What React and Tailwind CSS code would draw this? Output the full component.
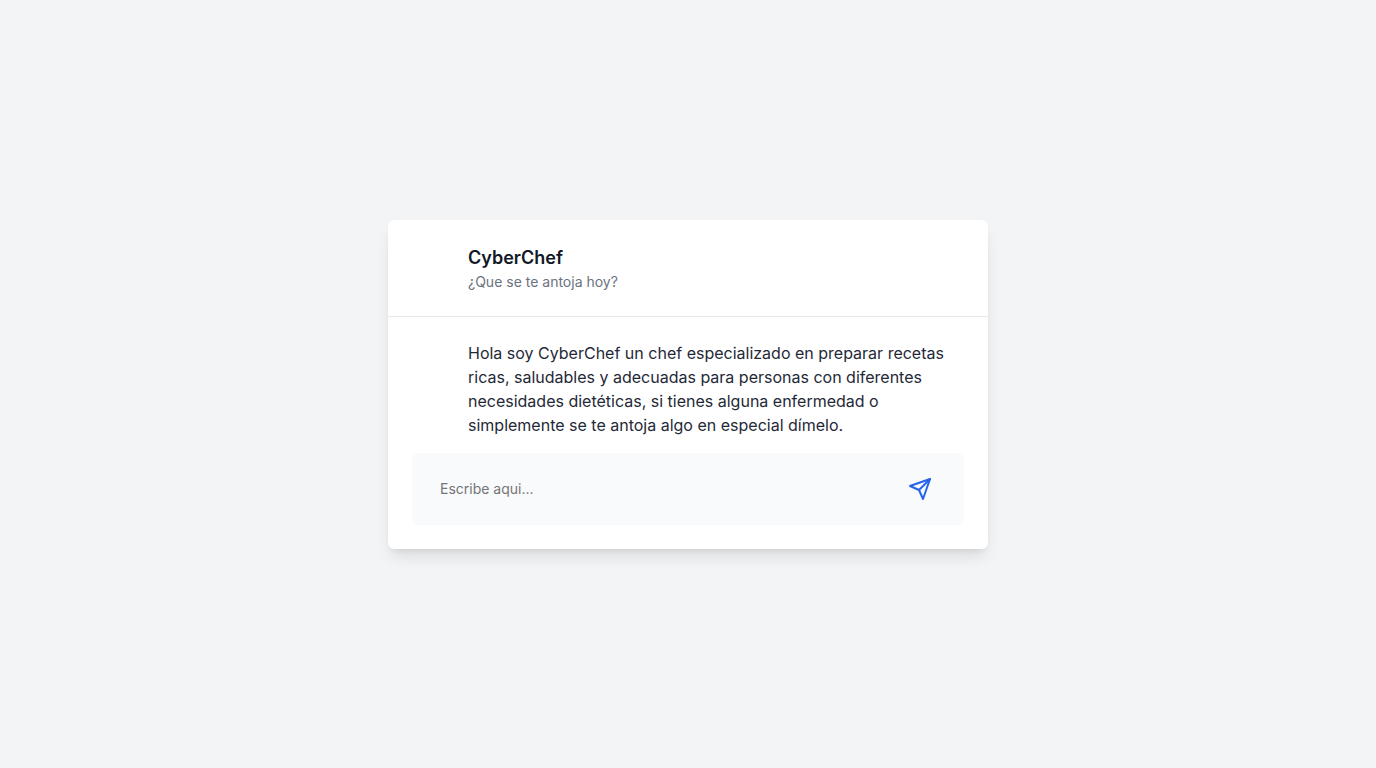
export default function App() {
  return (
    <main className="flex min-h-screen items-center justify-center bg-[#f3f4f6] font-['Inter',sans-serif]">
      <section className="w-full max-w-[600px] rounded-md bg-white shadow-lg">
        <header className="border-b border-[#e5e7eb] p-6">
          <div className="pl-14">
            <h1 className="text-lg leading-7 font-semibold text-[#111827]">CyberChef</h1>
            <p className="text-sm text-[#6b7280]">¿Que se te antoja hoy?</p>
          </div>
        </header>
        <div className="p-6">
          <p className="mb-4 pl-14 text-base text-[#1f2937]">
            Hola soy CyberChef un chef especializado en preparar recetas ricas, saludables y
            adecuadas para personas con diferentes necesidades dietéticas, si tienes alguna
            enfermedad o simplemente se te antoja algo en especial dímelo.
          </p>
          <form
            className="flex items-center gap-4 rounded-md bg-[#f9fafb] p-4"
            onSubmit={(event) => event.preventDefault()}
          >
            <input
              type="text"
              aria-label="Mensaje"
              placeholder="Escribe aqui..."
              className="h-10 min-w-0 flex-1 bg-transparent px-3 text-sm text-[#111827] placeholder:text-[#757575]"
            />
            <button
              type="submit"
              aria-label="Enviar"
              className="flex h-10 items-center px-4 text-[#2563eb]"
            >
              <svg
                className="size-6"
                viewBox="0 0 24 24"
                fill="none"
                stroke="currentColor"
                strokeWidth="2"
                strokeLinecap="round"
                strokeLinejoin="round"
                aria-hidden="true"
              >
                <path d="m22 2-7 20-4-9-9-4Z" />
                <path d="M22 2 11 13" />
              </svg>
            </button>
          </form>
        </div>
      </section>
    </main>
  );
}
